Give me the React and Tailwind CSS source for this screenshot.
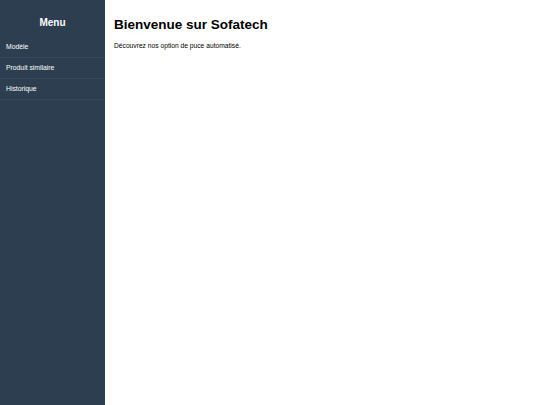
export default function App() {
  return (
    <div className="flex h-[405px] w-[540px] bg-white" style={{ fontFamily: '"Liberation Sans", Arial, sans-serif' }}>
      <div className="flex w-[105px] shrink-0 flex-col bg-[#2c3e50] text-white">
        <div className="pt-[17px] pb-[8px] text-center text-[10px] font-bold leading-[12px]">Menu</div>
        <ul>
          {['Modèle', 'Produit similaire', 'Historique'].map((t) => (
            <li key={t} className="flex h-[21px] items-center border-b border-[#34495e] pl-[6px] text-[6.8px]">{t}</li>
          ))}
        </ul>
      </div>
      <div className="flex-1 pl-[9px] pt-[17px] text-black">
        <h1 className="text-[13.5px] font-bold leading-[16px]">Bienvenue sur Sofatech</h1>
        <p className="mt-[9px] text-[6.7px] leading-[8px]">Découvrez nos option de puce automatisé.</p>
      </div>
    </div>
  );
}
